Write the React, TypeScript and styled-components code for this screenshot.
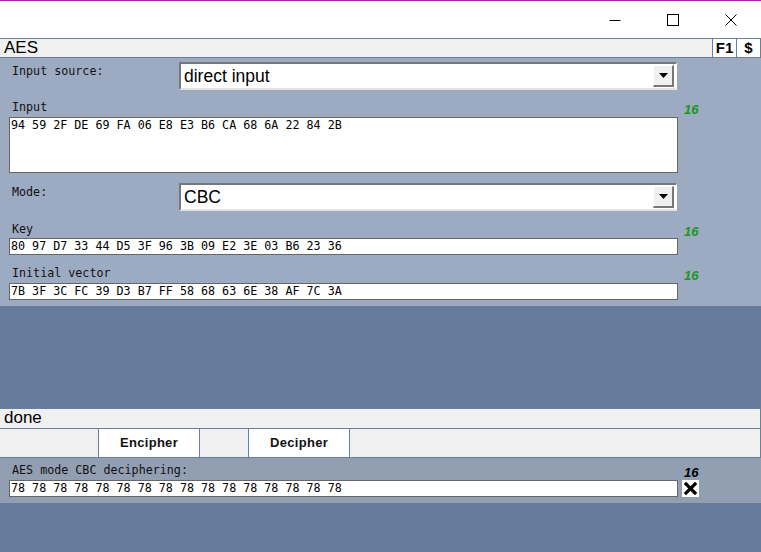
import * as React from 'react';
import styled, { createGlobalStyle } from 'styled-components';

const GlobalStyle = createGlobalStyle`
  html, body {
    margin: 0;
    padding: 0;
    background: #667a9c;
  }
`;

const mono = `"DejaVu Sans Mono", "Liberation Mono", monospace`;
const sans = `"Liberation Sans", Arial, sans-serif`;
const lineColor = '#6a7fa0';

const Window = styled.div`
  width: 761px;
  height: 552px;
  display: flex;
  flex-direction: column;
  background: #667a9c;
  overflow: hidden;
  font-family: ${sans};
`;

const TitleBar = styled.div`
  flex: none;
  height: 37px;
  border-top: 1px solid #a3259e;
  background: #ffffff;
  display: flex;
  justify-content: flex-end;
  padding-right: 1px;
`;

const WinButton = styled.div`
  width: 58px;
  display: flex;
  align-items: center;
  justify-content: center;
`;

interface BarProps {
  $top?: boolean;
  $height: number;
}

const Bar = styled.div<BarProps>`
  flex: none;
  display: flex;
  height: ${(p) => p.$height}px;
  background: #f0f0f0;
  border-top: ${(p) => (p.$top ? `1px solid ${lineColor}` : 'none')};
  border-bottom: 1px solid ${lineColor};
  border-right: 1px solid ${lineColor};
`;

const BarTitle = styled.div`
  flex: 1;
  padding-left: 4px;
  font-size: 17px;
  line-height: 18px;
  color: #000;
`;

const HelpKey = styled.div<{ $w: number }>`
  width: ${(p) => p.$w}px;
  background: #ffffff;
  border-left: 1px solid ${lineColor};
  font-size: 15px;
  font-weight: bold;
  line-height: 18px;
  text-align: center;
  color: #000;
`;

const Panel = styled.div<{ $bg: string; $pad: string }>`
  flex: none;
  background: ${(p) => p.$bg};
  padding: ${(p) => p.$pad};
  display: flex;
  flex-direction: column;
`;

const Gap = styled.div<{ $h: number }>`
  flex: none;
  height: ${(p) => p.$h}px;
`;

const FillArea = styled.div`
  flex: 1;
`;

const SelectRow = styled.div`
  display: flex;
  height: 28px;
`;

const Label = styled.div<{ $w?: number }>`
  width: ${(p) => (p.$w ? `${p.$w}px` : 'auto')};
  box-sizing: border-box;
  padding-left: 3px;
  font-family: ${mono};
  font-size: 11.7px;
  line-height: 14px;
  color: #111;
  white-space: pre;
`;

const SelectLabel = styled(Label)`
  padding-top: 2px;
`;

const SelectBox = styled.div`
  width: 498px;
  box-sizing: border-box;
  background: #ffffff;
  border-top: 2px solid #777;
  border-left: 2px solid #777;
  border-right: 1px solid #fff;
  border-bottom: 2px solid #e2e2e2;
  display: flex;
  align-items: center;
  padding: 0 2px 0 2px;
`;

const SelectText = styled.div`
  flex: 1;
  font-size: 17.5px;
  color: #000;
  padding-left: 1px;
`;

const DropButton = styled.div`
  width: 21px;
  height: 22px;
  box-sizing: border-box;
  background: #f0f0f0;
  border-top: 1px solid #fff;
  border-left: 1px solid #fff;
  border-right: 2px solid #777;
  border-bottom: 2px solid #777;
  display: flex;
  align-items: center;
  justify-content: center;
`;

const LabelRow = styled.div<{ $h: number; $pb: number }>`
  display: flex;
  align-items: flex-end;
  height: ${(p) => p.$h}px;
  box-sizing: border-box;
  padding-bottom: ${(p) => p.$pb}px;
`;

const Count = styled.div<{ $color: string }>`
  margin-left: 6px;
  margin-bottom: -3px;
  font-size: 13px;
  font-weight: bold;
  font-style: italic;
  line-height: 14px;
  color: ${(p) => p.$color};
`;

const FieldRow = styled.div`
  display: flex;
  align-items: center;
  gap: 4px;
`;

const Field = styled.div<{ $h: number }>`
  width: 669px;
  height: ${(p) => p.$h}px;
  box-sizing: border-box;
  background: #ffffff;
  border: 1px solid #666;
  padding: 0 1px;
  font-family: ${mono};
  font-size: 11.7px;
  line-height: 15px;
  color: #000;
  white-space: pre;
  overflow: hidden;
`;

const ClearButton = styled.div`
  width: 17px;
  height: 17px;
  background: #ffffff;
  display: flex;
  align-items: center;
  justify-content: center;
`;

const ButtonRow = styled(Bar)`
  padding-left: 98px;
  gap: 48px;
`;

const CmdButton = styled.div`
  width: 102px;
  box-sizing: border-box;
  background: #ffffff;
  border-left: 1px solid ${lineColor};
  border-right: 1px solid ${lineColor};
  font-size: 13px;
  font-weight: bold;
  line-height: 28px;
  text-align: center;
  color: #111;
  letter-spacing: 0.3px;
`;

const Arrow = () => (
  <svg width="9" height="5" viewBox="0 0 9 5">
    <path d="M0 0 H9 L4.5 5 Z" fill="#000" />
  </svg>
);

const Select: React.FC<{ value: string }> = ({ value }) => (
  <SelectBox>
    <SelectText>{value}</SelectText>
    <DropButton>
      <Arrow />
    </DropButton>
  </SelectBox>
);

const App: React.FC = () => (
  <Window>
    <GlobalStyle />
    <TitleBar>
      <WinButton>
        <svg width="12" height="12" viewBox="0 0 12 12">
          <path d="M0.5 6.5 H11.5" stroke="#000" strokeWidth="1" />
        </svg>
      </WinButton>
      <WinButton>
        <svg width="12" height="12" viewBox="0 0 12 12">
          <rect x="0.5" y="0.5" width="11" height="11" fill="none" stroke="#000" strokeWidth="1" />
        </svg>
      </WinButton>
      <WinButton>
        <svg width="12" height="12" viewBox="0 0 12 12">
          <path d="M0.5 0.5 L11.5 11.5 M11.5 0.5 L0.5 11.5" stroke="#000" strokeWidth="1" />
        </svg>
      </WinButton>
    </TitleBar>

    <Bar $top $height={18}>
      <BarTitle>AES</BarTitle>
      <HelpKey $w={23}>F1</HelpKey>
      <HelpKey $w={23}>$</HelpKey>
    </Bar>

    <Panel $bg="#9dabc2" $pad="4px 0 6px 9px">
      <SelectRow>
        <SelectLabel $w={170}>Input source:</SelectLabel>
        <Select value="direct input" />
      </SelectRow>
      <LabelRow $h={27} $pb={3}>
        <Label $w={669}>Input</Label>
        <Count $color="#1a961a">16</Count>
      </LabelRow>
      <Field $h={56}>{'94 59 2F DE 69 FA 06 E8 E3 B6 CA 68 6A 22 84 2B'}</Field>
      <Gap $h={10} />
      <SelectRow>
        <SelectLabel $w={170}>Mode:</SelectLabel>
        <Select value="CBC" />
      </SelectRow>
      <LabelRow $h={27} $pb={2}>
        <Label $w={669}>Key</Label>
        <Count $color="#1a961a">16</Count>
      </LabelRow>
      <Field $h={17}>{'80 97 D7 33 44 D5 3F 96 3B 09 E2 3E 03 B6 23 36'}</Field>
      <LabelRow $h={28} $pb={3}>
        <Label $w={669}>Initial vector</Label>
        <Count $color="#1a961a">16</Count>
      </LabelRow>
      <Field $h={17}>{'7B 3F 3C FC 39 D3 B7 FF 58 68 63 6E 38 AF 7C 3A'}</Field>
    </Panel>

    <Gap $h={102} />

    <Bar $top $height={19}>
      <BarTitle>done</BarTitle>
    </Bar>
    <ButtonRow $height={28}>
      <CmdButton>Encipher</CmdButton>
      <CmdButton>Decipher</CmdButton>
    </ButtonRow>

    <Panel $bg="#929fb2" $pad="0 0 6px 9px">
      <LabelRow $h={22} $pb={3}>
        <Label $w={669}>AES mode CBC deciphering:</Label>
        <Count $color="#000">16</Count>
      </LabelRow>
      <FieldRow>
        <Field $h={17}>{'78 78 78 78 78 78 78 78 78 78 78 78 78 78 78 78'}</Field>
        <ClearButton>
          <svg width="13" height="13" viewBox="0 0 13 13">
            <path d="M2 2 L11 11 M11 2 L2 11" stroke="#000" strokeWidth="3.2" strokeLinecap="square" />
          </svg>
        </ClearButton>
      </FieldRow>
    </Panel>

    <FillArea />
  </Window>
);

export default App;
